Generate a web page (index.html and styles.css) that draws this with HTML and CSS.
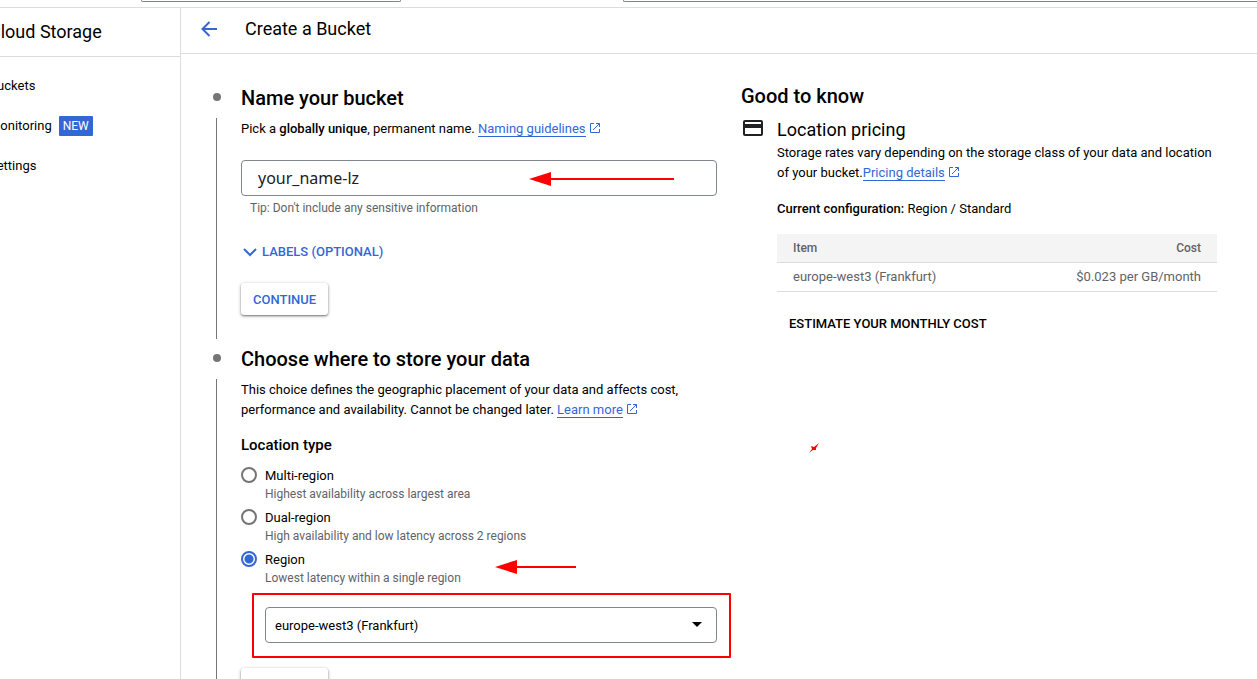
FILE: index.html
```html
<!DOCTYPE html>
<html lang="en">
<head>
<meta charset="utf-8">
<title>Create a Bucket</title>
<link rel="stylesheet" href="styles.css">
</head>
<body>
<svg class="defs" aria-hidden="true">
  <symbol id="external" viewBox="0 0 12 12"><path d="M5 1.5H1.5v9h9V7M7 1.5h3.5V5M10.5 1.5L4 8" fill="none" stroke="currentColor" stroke-width="1"/></symbol>
  <symbol id="arrowhead" viewBox="0 0 22 14"><path d="M0 7L22 0v14z" fill="currentColor"/></symbol>
</svg>
<header class="topbar"><div class="project-box"></div><div class="search-box"></div></header>
<div class="shell">
  <nav class="sidebar">
    <div class="product">Cloud Storage</div>
    <ul class="nav-list">
      <li><a href="#">Buckets</a></li>
      <li><a href="#">Monitoring</a><span class="badge">NEW</span></li>
      <li><a href="#">Settings</a></li>
    </ul>
  </nav>
  <main class="main">
    <div class="page-head">
      <button class="back" type="button" aria-label="Back">
        <svg width="16" height="16" viewBox="0 0 16 16"><path d="M16 8H1.5M8.5 1L1.5 8l7 7" fill="none" stroke="currentColor" stroke-width="2"/></svg>
      </button>
      <h1>Create a Bucket</h1>
    </div>
    <div class="content">
      <div class="steps">
        <section class="step">
          <div class="marker"><span class="dot"></span><span class="rail"></span></div>
          <div class="step-body">
            <h2>Name your bucket</h2>
            <p>Pick a <b>globally unique</b>, permanent name. <a class="link" href="#">Naming guidelines</a><svg class="ext"><use href="#external"/></svg></p>
            <div class="field">
              <input class="name-input" type="text" value="your_name-lz" aria-label="Bucket name" aria-describedby="tip">
              <div class="arrow arrow-name"><svg><use href="#arrowhead"/></svg><span></span></div>
            </div>
            <div class="tip" id="tip">Tip: Don't include any sensitive information</div>
            <button class="expander" type="button"><svg width="14" height="9" viewBox="0 0 14 9"><path d="M1 1l6 6 6-6" fill="none" stroke="currentColor" stroke-width="2"/></svg>LABELS (OPTIONAL)</button>
            <button class="raised" type="button">CONTINUE</button>
          </div>
        </section>
        <section class="step">
          <div class="marker"><span class="dot"></span><span class="rail"></span></div>
          <div class="step-body">
            <h2>Choose where to store your data</h2>
            <p>This choice defines the geographic placement of your data and affects cost, performance and availability. Cannot be changed later. <a class="link" href="#">Learn more</a><svg class="ext"><use href="#external"/></svg></p>
            <fieldset class="location">
              <legend>Location type</legend>
              <label class="option"><input type="radio" name="loc"><span class="option-name">Multi-region</span><span class="option-note">Highest availability across largest area</span></label>
              <label class="option"><input type="radio" name="loc"><span class="option-name">Dual-region</span><span class="option-note">High availability and low latency across 2 regions</span></label>
              <label class="option"><input type="radio" name="loc" checked><span class="option-name">Region</span><span class="option-note">Lowest latency within a single region</span></label>
              <div class="arrow arrow-region"><svg><use href="#arrowhead"/></svg><span></span></div>
            </fieldset>
            <div class="region">
              <select aria-label="Region"><option>europe-west3 (Frankfurt)</option></select>
              <svg class="caret" width="10" height="5" viewBox="0 0 10 5"><path d="M0 0h10L5 5z"/></svg>
              <div class="highlight"></div>
            </div>
            <button class="raised" type="button">CONTINUE</button>
          </div>
        </section>
      </div>
      <aside class="info">
        <h2>Good to know</h2>
        <div class="info-row">
          <svg class="card" width="24" height="24" viewBox="0 0 24 24"><path fill-rule="evenodd" d="M4 4h16a2 2 0 0 1 2 2v12a2 2 0 0 1-2 2H4a2 2 0 0 1-2-2V6a2 2 0 0 1 2-2zM4 6v2h16V6zM4 12v6h16v-6z"/></svg>
          <div class="info-body">
            <h3>Location pricing</h3>
            <p>Storage rates vary depending on the storage class of your data and location of your bucket.<a class="link" href="#">Pricing details</a><svg class="ext"><use href="#external"/></svg></p>
            <p class="config"><b>Current configuration:</b> Region / Standard</p>
            <table>
              <thead><tr><th>Item</th><th>Cost</th></tr></thead>
              <tbody><tr><td>europe-west3 (Frankfurt)</td><td>$0.023 per GB/month</td></tr></tbody>
            </table>
            <button class="estimate" type="button">ESTIMATE YOUR MONTHLY COST</button>
          </div>
        </div>
        <svg class="scribble" width="10" height="10" viewBox="0 0 10 10"><path d="M0 10L3 6 2 3l3 1L10 0 7 5v2L4 7z" fill="currentColor"/></svg>
      </aside>
    </div>
  </main>
</div>
</body>
</html>
```
FILE: styles.css
```css
* { box-sizing: border-box; }
body {
  margin: 0;
  height: 100vh;
  overflow: hidden;
  display: flex;
  flex-direction: column;
  background: #fff;
  color: #000;
  font: 400 13px/20px Roboto, sans-serif;
}
h1, h2, h3, p, ul, fieldset { margin: 0; padding: 0; border: 0; }
button { border: 0; background: none; padding: 0; font: 500 13px/20px Roboto, sans-serif; color: #3367d6; }
b { font-weight: 500; }
svg { flex: none; }
.defs { position: absolute; width: 0; height: 0; }

.topbar {
  flex: none;
  display: grid;
  grid-template-columns: 260px 1fr;
  gap: 222px;
  align-items: start;
  height: 8px;
  padding-left: 141px;
  border-bottom: 1px solid #dadce0;
}
.project-box, .search-box { height: 2px; border: 1px solid #80868b; border-top: 0; border-radius: 0 0 4px 4px; }
.search-box { border-right: 0; border-bottom-right-radius: 0; }

.shell { flex: 1; display: flex; min-height: 0; }
.sidebar { flex: none; width: 193px; margin-left: -12px; border-right: 1px solid #dadce0; }
.product { height: 49px; padding-left: 1px; border-bottom: 1px solid #dadce0; font-size: 18px; line-height: 48px; }
.nav-list { list-style: none; padding: 9px 1px; }
.nav-list li { display: flex; align-items: center; gap: 7px; height: 40px; }
.nav-list a { color: #000; text-decoration: none; }
.badge { padding: 1px 4px 0; background: #3367d6; color: #fff; font-size: 12px; line-height: 19px; border-radius: 1px; }

.main { flex: 1; min-width: 0; }
.page-head { display: flex; align-items: center; gap: 28px; height: 46px; padding: 0 20px 3px; border-bottom: 1px solid #dadce0; }
.page-head h1 { font-size: 18px; font-weight: 400; line-height: 24px; }
.back { display: flex; }

.content { display: grid; grid-template-columns: calc(50% + 6px) 1fr; gap: 24px; padding: 24px 40px 0 24px; }
.step { display: grid; grid-template-columns: 23px minmax(0, 1fr); gap: 13px; }
.step-body { display: flex; flex-direction: column; align-items: flex-start; padding-bottom: 24px; }
.marker { display: flex; flex-direction: column; align-items: center; padding-top: 15px; gap: 17px; }
.dot { width: 8px; height: 8px; border-radius: 50%; background: #757575; }
.rail { flex: 1; width: 1px; background: #757575; }
h2 { font-size: 20px; font-weight: 500; line-height: 40px; }
.step-body h2 { margin-bottom: 1px; }
.link { color: #3367d6; text-decoration: none; border-bottom: 1px solid #3367d6; }
.ext { width: 12px; height: 12px; margin-left: 3px; color: #3367d6; vertical-align: -1px; }

.field { position: relative; align-self: stretch; margin-top: 21px; }
.name-input {
  display: block;
  width: 100%;
  height: 36px;
  padding: 0 16px;
  border: 1px solid #80868b;
  border-radius: 4px;
  background: #fff;
  color: #202124;
  font: 400 16px/20px "Noto Sans", sans-serif;
}
.tip { margin: 4px 9px 0; color: #5f6368; font-size: 12px; line-height: 16px; }
.expander { display: flex; align-items: center; gap: 5px; height: 32px; margin-top: 20px; padding: 0 2px; }
.raised {
  height: 32px;
  margin-top: 15px;
  padding: 2px 12px 0;
  border-radius: 3px;
  background: #fff;
  box-shadow: 0 1px 2px rgba(0, 0, 0, .45), 0 1px 4px rgba(0, 0, 0, .2);
}
.arrow { position: absolute; display: flex; align-items: center; color: #f00; }
.arrow svg { width: 22px; height: 14px; }
.arrow span { flex: 1; height: 2px; background: currentColor; }
.arrow-name { right: 43px; top: 12px; width: 145px; }
.arrow-region { right: 141px; bottom: 12px; width: 81px; }

.location { position: relative; align-self: stretch; margin-top: 15px; display: flex; flex-direction: column; gap: 6px; }
.location legend { padding: 0 0 11px; font-size: 15px; font-weight: 500; line-height: 20px; }
.option { display: grid; grid-template-columns: 16px 1fr; column-gap: 8px; }
.option input {
  appearance: none;
  width: 16px;
  height: 16px;
  margin: 1px 0;
  border: 2px solid #757575;
  border-radius: 50%;
}
.option input:checked { border-color: #3367d6; background: radial-gradient(circle, #3367d6 4px, #fff 5px); }
.option-note { grid-column: 2; color: #5f6368; font-size: 12px; line-height: 16px; }
.region { position: relative; align-self: stretch; margin: 21px 0 10px 24px; }
.region select {
  appearance: none;
  display: block;
  width: 100%;
  height: 36px;
  padding: 2px 9px 0;
  border: 1px solid #80868b;
  border-radius: 4px;
  background: #fff;
  color: #000;
  font: inherit;
}
.caret { position: absolute; right: 15px; top: 15px; }
.highlight { position: absolute; inset: -14px -14px -15px -13px; border: 2px solid #f00; border-radius: 1px; pointer-events: none; }

.info { position: relative; }
.info > h2 { line-height: 36px; }
.info-row { display: flex; gap: 12px; padding-top: 2px; fill: #202124; }
.info-body { flex: 1; min-width: 0; padding-top: 2px; }
.info-body h3 { margin-bottom: 1px; font-size: 18px; font-weight: 400; line-height: 24px; }
.config { padding: 16px 0 15px; }
table { width: 100%; border-collapse: separate; border-spacing: 0; color: #5f6368; }
th { background: #f4f4f4; font-size: 12px; font-weight: 500; }
th, td { height: 29px; padding: 0 16px; border-bottom: 1px solid #dadce0; text-align: left; }
th:last-child, td:last-child { text-align: right; }
.estimate { height: 32px; margin-top: 16px; padding: 0 12px; color: #000; }
.scribble { position: absolute; left: 68px; top: 365px; color: #f00; }
```
